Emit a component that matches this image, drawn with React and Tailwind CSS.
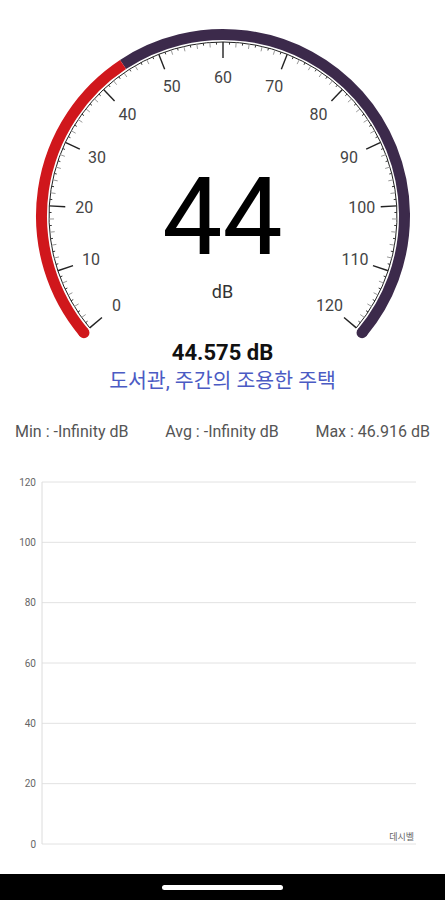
import React from "react";

const CX = 223;
const CY = 216;
const VALUE = 44.575;

// 0..120 dB over a 260 degree sweep, 60 at the top
const angle = (v) => ((v - 60) * 260) / 120;

const pt = (v, r) => {
  const a = (angle(v) * Math.PI) / 180;
  return [CX + r * Math.sin(a), CY - r * Math.cos(a)];
};

const arc = (from, to, r) => {
  const [x1, y1] = pt(from, r);
  const [x2, y2] = pt(to, r);
  const large = angle(to) - angle(from) > 180 ? 1 : 0;
  return `M ${x1} ${y1} A ${r} ${r} 0 ${large} 1 ${x2} ${y2}`;
};

const Gauge = () => {
  const ticks = [];
  for (let v = 0; v <= 120; v++) {
    const major = v % 10 === 0;
    const minor = v % 2 === 0;
    const len = major ? 16 : minor ? 5 : 2.5;
    const [x1, y1] = pt(v, 174);
    const [x2, y2] = pt(v, 174 - len);
    ticks.push(
      <line
        key={v}
        x1={x1}
        y1={y1}
        x2={x2}
        y2={y2}
        stroke={major ? "#222" : minor ? "#999" : "#333"}
        strokeWidth={major ? 1.4 : 1}
      />
    );
  }

  const labels = [];
  for (let v = 0; v <= 120; v += 10) {
    const [x, y] = pt(v, 139);
    labels.push(
      <text
        key={v}
        x={x}
        y={y}
        textAnchor="middle"
        dominantBaseline="central"
        fontSize="16"
        fill="#444"
      >
        {v}
      </text>
    );
  }

  const [sx, sy] = pt(0, 181.5);
  const [ex, ey] = pt(120, 181.5);

  return (
    <svg width="445" height="340" className="block" style={{ fontFamily: "Roboto, sans-serif" }}>
      <path d={arc(VALUE, 120, 181.5)} fill="none" stroke="#3c2a4b" strokeWidth="11" />
      <circle cx={ex} cy={ey} r="5.5" fill="#3c2a4b" />
      <path d={arc(0, VALUE, 181.5)} fill="none" stroke="#d0171c" strokeWidth="11" />
      <circle cx={sx} cy={sy} r="5.5" fill="#d0171c" />
      <path d={arc(0, 120, 174)} fill="none" stroke="#222" strokeWidth="1" />
      {ticks}
      {labels}
      <text x="222.5" y="254" textAnchor="middle" fontSize="107" fill="#000">
        44
      </text>
      <text x="222.5" y="298" textAnchor="middle" fontSize="18" fill="#333">
        dB
      </text>
    </svg>
  );
};

const Chart = () => {
  const rows = [120, 100, 80, 60, 40, 20, 0];
  const step = 362 / 6;
  return (
    <svg width="445" height="432" className="block" style={{ fontFamily: "Roboto, 'Noto Sans CJK KR', sans-serif" }}>
      {rows.map((r, i) => {
        const y = 40 + i * step;
        return (
          <g key={r}>
            <line x1="42" y1={y} x2="416" y2={y} stroke="#e2e2e2" strokeWidth="1" />
            <text x="36" y={y + 3.5} textAnchor="end" fontSize="10" fill="#666">
              {r}
            </text>
          </g>
        );
      })}
      <line x1="42" y1="40" x2="42" y2="402" stroke="#dcdcdc" strokeWidth="1" />
      <text x="414" y="398" textAnchor="end" fontSize="9" fill="#666">
        데시벨
      </text>
    </svg>
  );
};

const App = () => {
  return (
    <div className="w-[445px] h-[900px] bg-white flex flex-col font-['Roboto','Noto_Sans_CJK_KR',sans-serif]">
      <Gauge />

      <div className="mt-[2px] text-center text-[22px] leading-[22px] font-bold text-[#111]">44.575 dB</div>
      <div className="mt-[5px] text-center text-[20.5px] leading-[24px] text-[#4b5bc4]">
        도서관, 주간의 조용한 주택
      </div>

      <div className="mt-[29px] px-[15px] flex justify-between text-[16px] leading-[20px] text-[#555]">
        <span>Min : -Infinity dB</span>
        <span>Avg : -Infinity dB</span>
        <span>Max : 46.916 dB</span>
      </div>

      <Chart />

      <div className="mt-auto h-[26px] bg-black flex items-center justify-center">
        <div className="w-[121px] h-[5px] rounded-full bg-white" />
      </div>
    </div>
  );
};

export default App;
